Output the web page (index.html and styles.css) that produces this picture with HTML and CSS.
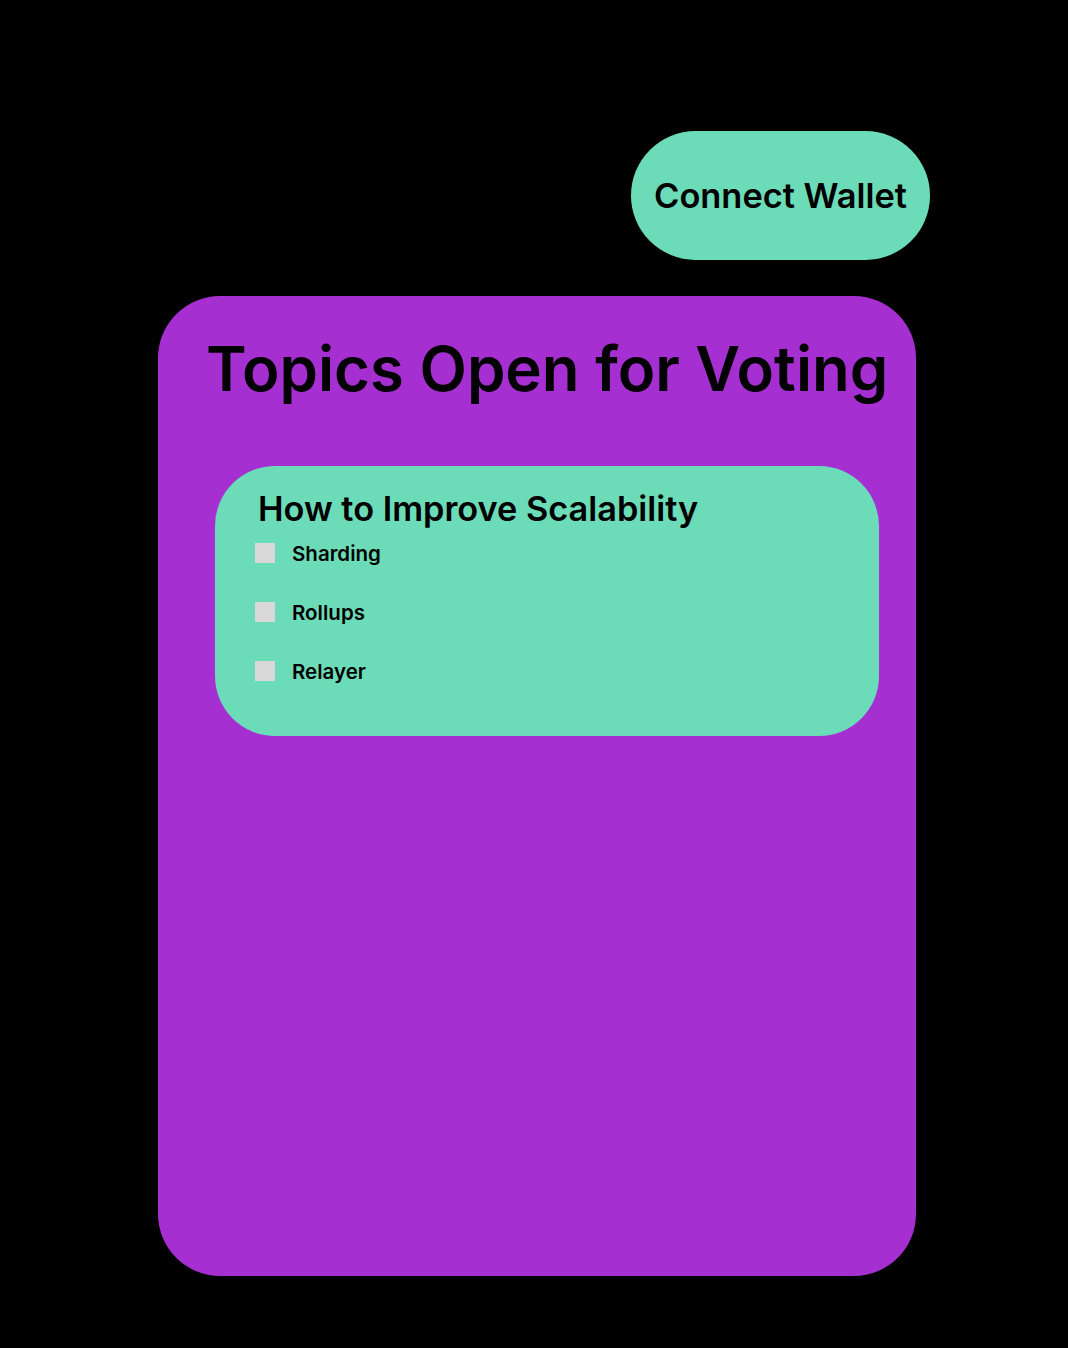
FILE: index.html
```html
<!DOCTYPE html>
<html lang="en">
<head>
    <meta charset="UTF-8">
    <meta name="viewport" content="width=device-width, initial-scale=1.0">
    <title>Topics Open for Voting</title>
    <link rel="stylesheet" href="styles.css">
</head>
<body>
    <header class="top-bar">
        <button class="connect-button">Connect Wallet</button>
    </header>

    <main class="board">
        <h1>Topics Open for Voting</h1>

        <!-- One card per topic -->
        <section class="topic">
            <h2>How to Improve Scalability</h2>
            <label class="option"><input type="checkbox"> Sharding</label>
            <label class="option"><input type="checkbox"> Rollups</label>
            <label class="option"><input type="checkbox"> Relayer</label>
        </section>
    </main>
</body>
</html>
```

FILE: styles.css
```css
body {
    margin: 0;
    background: #000;
    color: #000;
    font-family: Inter, "Noto Sans", sans-serif;
    min-height: 1348px;
}
.top-bar {
    display: flex;
    justify-content: flex-end;
    padding: 131px 138px 0 0;
}
.connect-button {
    height: 129px;
    padding: 0 23px;
    border: none;
    border-radius: 65px;
    background: #6bdcb7;
    color: #000;
    font-family: Inter, sans-serif;
    font-size: 34.4px;
    font-weight: 600;
    cursor: pointer;
}
.board {
    box-sizing: border-box;
    width: 758px;
    height: 980px;
    margin: 36px 0 0 158px;
    padding-top: 42px;
    background: #a52fd0;
    border-radius: 62px;
}
.board h1 {
    margin: 0 0 66px 48px;
    font-size: 61.7px;
    font-weight: 600;
    line-height: 1;
    white-space: nowrap;
}
.topic {
    box-sizing: border-box;
    width: 664px;
    height: 270px;
    margin-left: 57px;
    padding: 26px 0 0 40px;
    background: #6bdcb7;
    border-radius: 60px;
    display: flex;
    flex-direction: column;
    gap: 39px;
}
.topic h2 {
    margin: 0 0 -22px 3px;
    font-size: 34.3px;
    font-weight: 600;
    line-height: 1;
}
.option {
    display: flex;
    align-items: center;
    gap: 17px;
    height: 20px;
    font-size: 20.5px;
    font-weight: 600;
}
.option input {
    appearance: none;
    width: 20px;
    height: 20px;
    margin: 0;
    background: #d9d9d9;
}
```
